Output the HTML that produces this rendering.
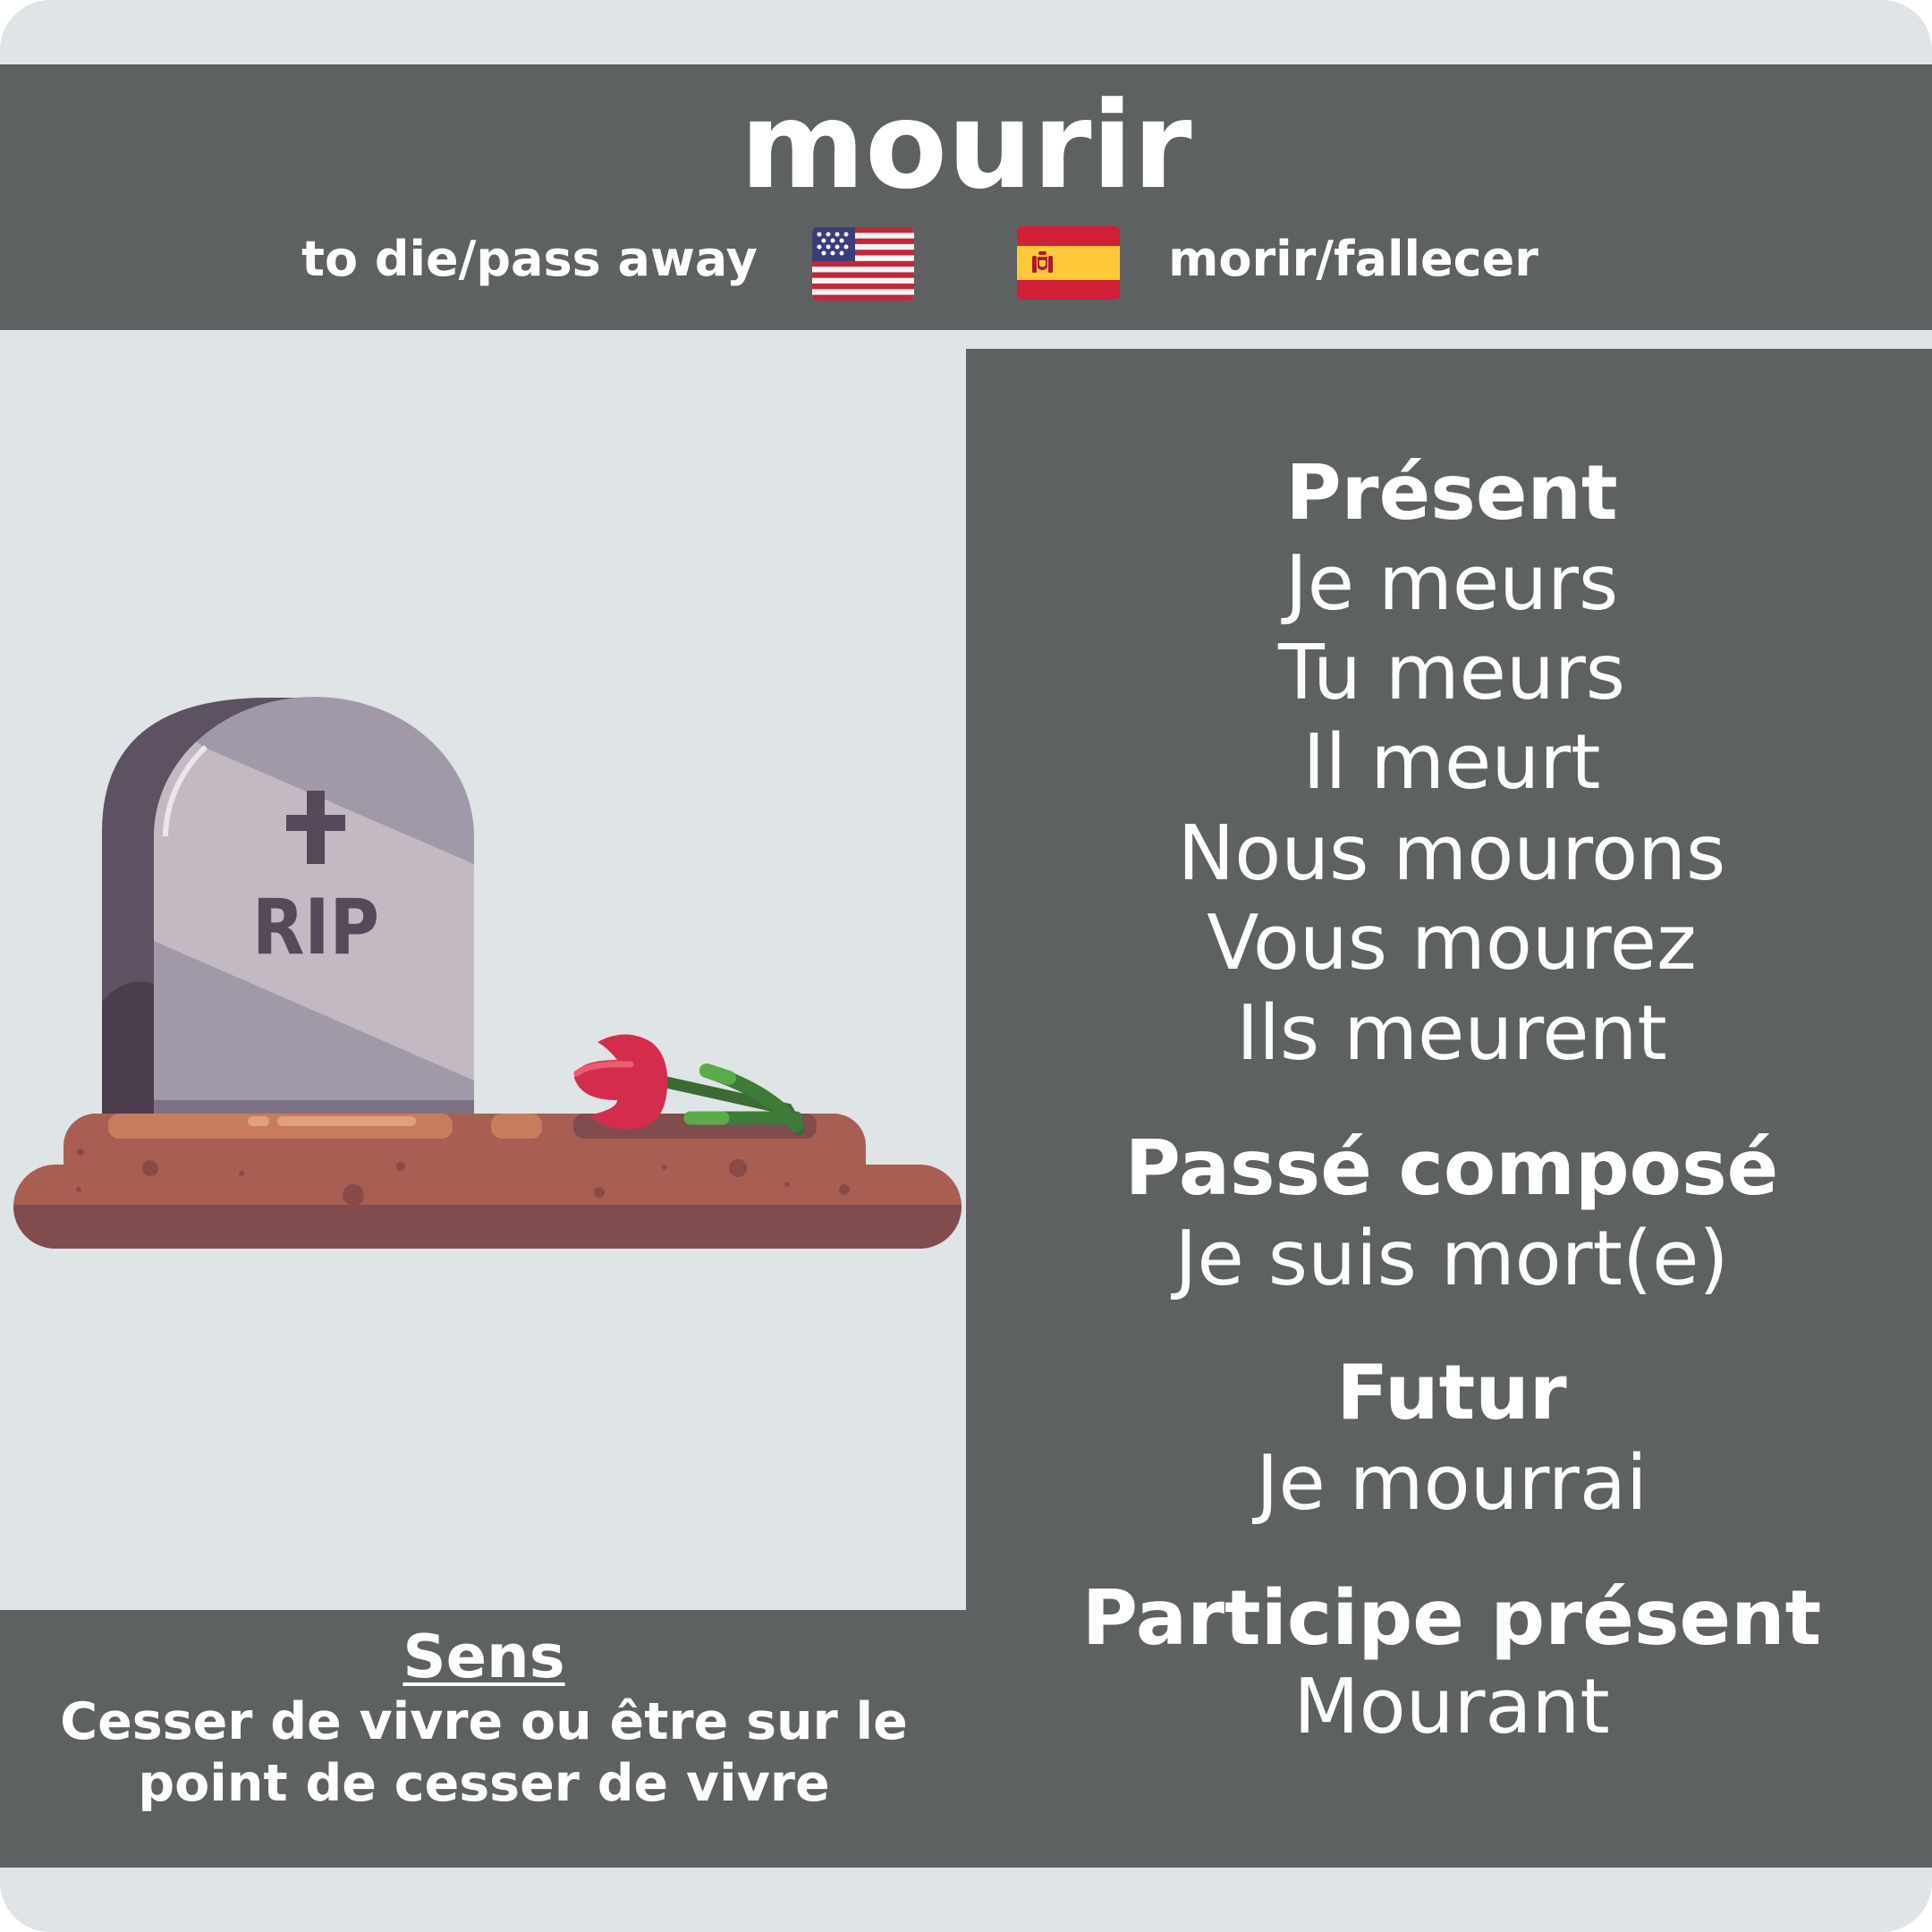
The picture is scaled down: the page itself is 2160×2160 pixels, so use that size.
<!DOCTYPE html>
<html><head><meta charset="utf-8"><style>
html,body{margin:0;padding:0;background:#fff;}
#c{position:relative;width:2160px;height:2160px;background:#dfe4e6;border-radius:56px;overflow:hidden;font-family:"DejaVu Sans","Liberation Sans",sans-serif;color:#fff;}
.b{position:absolute;background:#5e6162;}
.t{position:absolute;white-space:nowrap;line-height:1;transform:translateX(-50%);}
.r{font-size:85px;left:1623px;}
.bd{font-weight:bold;}
</style></head><body><div id="c">
<div class="b" style="left:0;top:72px;width:2160px;height:297px"></div>
<div class="b" style="left:1080px;top:390px;width:1080px;height:1698px"></div>
<div class="b" style="left:0;top:1800px;width:1080px;height:288px"></div>

<div class="t bd" style="font-size:134px;left:1080px;top:96px">mourir</div>
<div class="t bd" style="font-size:54px;left:592px;top:263px">to die/pass away</div>
<div class="t bd" style="font-size:54px;left:1513px;top:263px">morir/fallecer</div>

<svg style="position:absolute;left:908px;top:254px" width="114" height="82" viewBox="0 0 114 82">
<defs><clipPath id="uf"><rect width="114" height="82" rx="5"/></clipPath></defs>
<g clip-path="url(#uf)"><rect width="114" height="82" fill="#f4f4f4"/>
<g fill="#c1273a"><rect y="0" width="114" height="6.3"/><rect y="12.6" width="114" height="6.3"/><rect y="25.2" width="114" height="6.3"/><rect y="37.8" width="114" height="6.3"/><rect y="50.4" width="114" height="6.3"/><rect y="63" width="114" height="6.3"/><rect y="75.6" width="114" height="6.4"/></g>
<rect width="48" height="38" fill="#3a3d78"/>
<g fill="#fff"><circle cx="8" cy="8" r="2.5"/><circle cx="18" cy="8" r="2.5"/><circle cx="28" cy="8" r="2.5"/><circle cx="38" cy="8" r="2.5"/><circle cx="13" cy="15" r="2.5"/><circle cx="23" cy="15" r="2.5"/><circle cx="33" cy="15" r="2.5"/><circle cx="8" cy="22" r="2.5"/><circle cx="18" cy="22" r="2.5"/><circle cx="28" cy="22" r="2.5"/><circle cx="38" cy="22" r="2.5"/><circle cx="13" cy="29" r="2.5"/><circle cx="23" cy="29" r="2.5"/><circle cx="33" cy="29" r="2.5"/></g></g></svg>

<svg style="position:absolute;left:1137px;top:253px" width="115" height="82" viewBox="0 0 115 82">
<defs><clipPath id="sf"><rect width="115" height="82" rx="6"/></clipPath></defs>
<g clip-path="url(#sf)"><rect width="115" height="82" fill="#d21f38"/><rect y="22" width="115" height="38" fill="#fdc93a"/>
<g fill="#b0182b"><rect x="17" y="33" width="5" height="19" rx="2"/><rect x="35" y="33" width="5" height="19" rx="2"/><rect x="24" y="28" width="9" height="4" rx="2"/><path d="M23 34h11v12q-5.5 6-11 0z"/></g>
<path d="M25 38h7v6q-3.5 3-7 0z" fill="#fdc93a"/></g></svg>

<svg style="position:absolute;left:0;top:740px" width="1080" height="680" viewBox="0 740 1080 680">
<defs>
<clipPath id="fr"><path d="M172 1245V935A179 156 0 0 1 530 935V1245Z"/></clipPath>
<clipPath id="lb"><rect x="15" y="1302" width="1060" height="94" rx="47"/></clipPath>
</defs>
<path d="M114 1245V930Q114 780 300 780H330V1245Z" fill="#5d5262"/>
<path d="M114 1120V1245H172V1100Q140 1090 114 1120Z" fill="#483e4c"/>
<g clip-path="url(#fr)">
<rect x="160" y="770" width="380" height="480" fill="#a199a8"/>
<path d="M172 790L227 835L530 966V1208L172 1052Z" fill="#c3b9c3"/>
<rect x="160" y="1230" width="380" height="20" fill="#7d7283"/>
</g>
<path d="M185 935A170 150 0 0 1 230 835" stroke="#eae6ea" stroke-width="6" fill="none"/>
<rect x="343" y="884" width="20" height="82" fill="#56495a"/>
<rect x="320" y="911" width="66" height="18" fill="#56495a"/>
<text x="282" y="1066" font-family="DejaVu Sans" font-weight="bold" font-size="86" fill="#56495a" textLength="142" lengthAdjust="spacingAndGlyphs">RIP</text>
<rect x="71" y="1245" width="897" height="120" rx="36" fill="#a95e54"/>
<rect x="15" y="1302" width="1060" height="94" rx="47" fill="#a95e54"/>
<rect x="0" y="1347" width="1080" height="60" fill="#824b4d" clip-path="url(#lb)"/>
<rect x="121" y="1245" width="385" height="28" rx="12" fill="#c97b5d"/>
<rect x="549" y="1245" width="57" height="28" rx="12" fill="#c97b5d"/>
<rect x="310" y="1248" width="155" height="11" rx="5" fill="#dfa07d"/>
<rect x="277" y="1248" width="24" height="11" rx="5" fill="#dfa07d"/>
<rect x="641" y="1245" width="272" height="28" rx="12" fill="#824b4d"/>
<g fill="#8a4a48"><circle cx="168" cy="1306" r="9"/><circle cx="448" cy="1304" r="5"/><circle cx="825" cy="1306" r="10"/><circle cx="395" cy="1336" r="12"/><circle cx="670" cy="1333" r="6"/><circle cx="944" cy="1330" r="6"/><circle cx="90" cy="1288" r="4"/><circle cx="270" cy="1312" r="3"/><circle cx="743" cy="1305" r="3"/><circle cx="88" cy="1330" r="3"/><circle cx="880" cy="1324" r="3"/></g>
<path d="M745 1210L880 1240L893 1262" stroke="#3b6a35" stroke-width="13" fill="none" stroke-linecap="round"/>
<path d="M790 1197Q860 1220 890 1258" stroke="#3e7a38" stroke-width="16" fill="none" stroke-linecap="round"/>
<path d="M790 1197L815 1205" stroke="#5aab4a" stroke-width="16" stroke-linecap="round"/>
<path d="M772 1250H890" stroke="#3e7a38" stroke-width="15" stroke-linecap="round"/>
<path d="M772 1250H808" stroke="#5aab4a" stroke-width="15" stroke-linecap="round"/>
<path d="M668 1165Q700 1148 728 1165Q748 1180 746 1215Q744 1258 710 1262Q680 1266 658 1247Q690 1240 690 1230Q650 1230 642 1205Q645 1185 690 1185Q680 1172 668 1165Z" fill="#d42c4c"/>
<path d="M645 1200Q660 1188 705 1190" stroke="#ee5a70" stroke-width="7" fill="none" stroke-linecap="round"/>
</svg>

<div class="t r bd" style="top:509px">Présent</div>
<div class="t r" style="top:610px">Je meurs</div>
<div class="t r" style="top:710px">Tu meurs</div>
<div class="t r" style="top:810px">Il meurt</div>
<div class="t r" style="top:912px">Nous mourons</div>
<div class="t r" style="top:1012px">Vous mourez</div>
<div class="t r" style="top:1113px">Ils meurent</div>
<div class="t r bd" style="top:1264px">Passé composé</div>
<div class="t r" style="top:1365px">Je suis mort(e)</div>
<div class="t r bd" style="top:1515px">Futur</div>
<div class="t r" style="top:1616px">Je mourrai</div>
<div class="t r bd" style="top:1767px">Participe présent</div>
<div class="t r" style="top:1866px">Mourant</div>

<div class="t bd" style="font-size:67px;left:541px;top:1819px;text-decoration:underline;text-decoration-thickness:4px;text-underline-offset:6px">Sens</div>
<div class="t bd" style="font-size:57px;left:541px;top:1897px">Cesser de vivre ou être sur le</div>
<div class="t bd" style="font-size:57px;left:541px;top:1966px">point de cesser de vivre</div>
</div></body></html>
